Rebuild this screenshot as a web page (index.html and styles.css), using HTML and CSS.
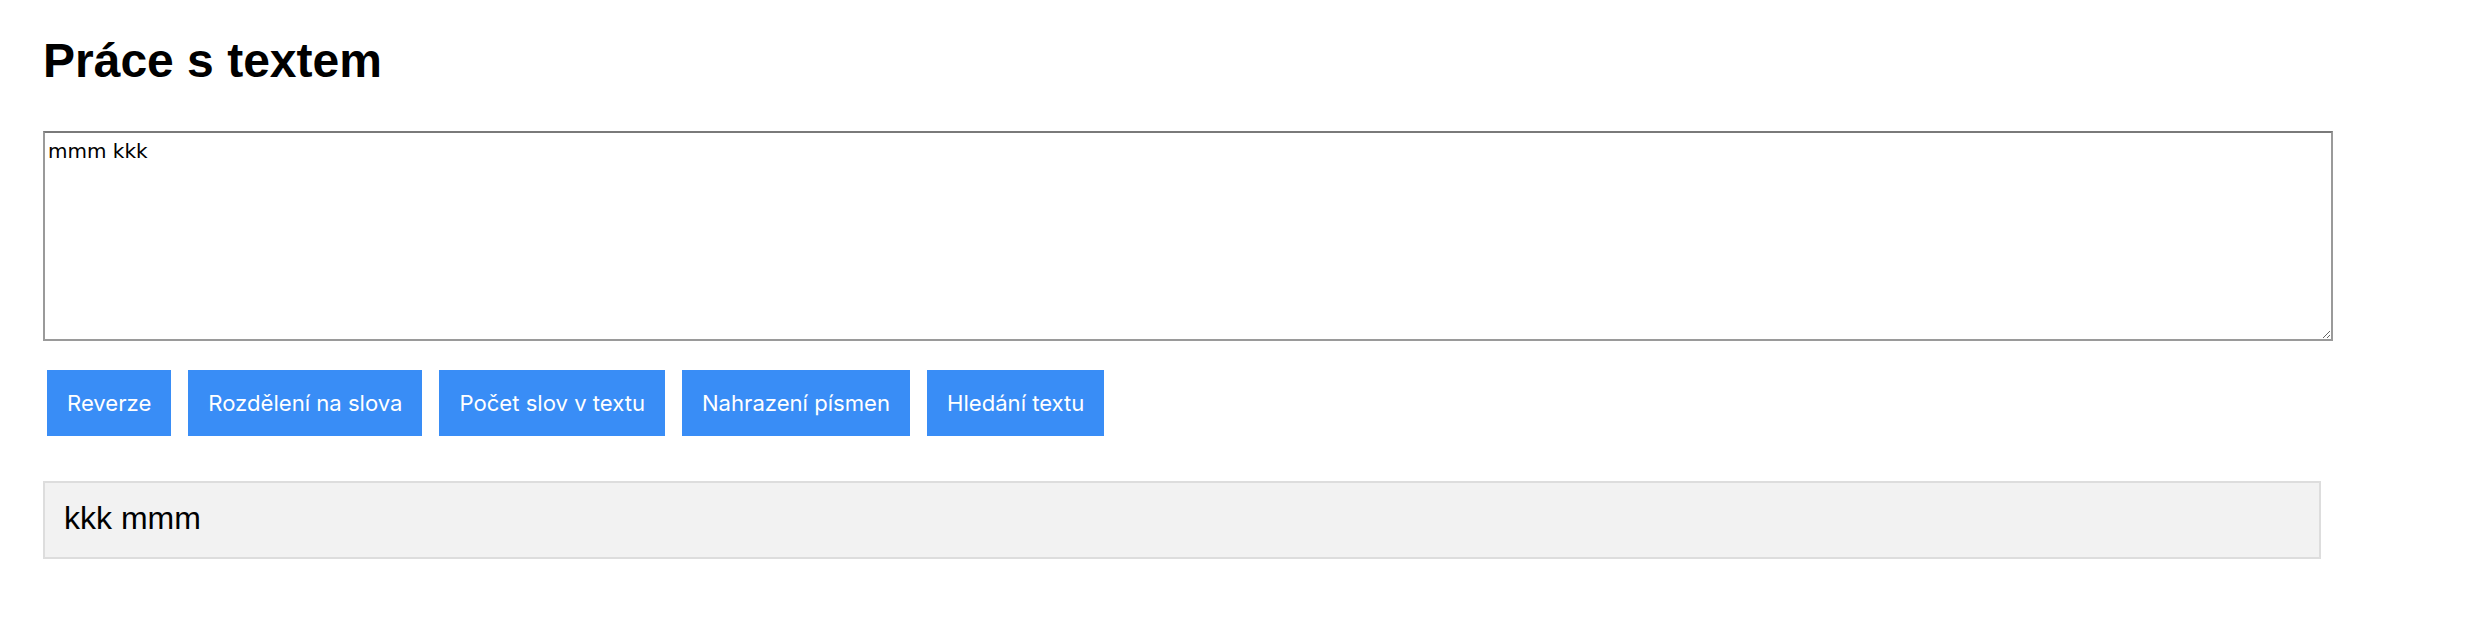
FILE: index.html
```html
<!DOCTYPE html>
<html lang="cs">
<head>
<meta charset="utf-8">
<title>Práce s textem</title>
<link rel="stylesheet" href="styles.css">
</head>
<body>
<div class="page">
  <h1 class="title">Práce s textem</h1>
  <textarea class="input">mmm kkk</textarea>
  <div class="actions">
    <button class="btn">Reverze</button>
    <button class="btn">Rozdělení na slova</button>
    <button class="btn">Počet slov v textu</button>
    <button class="btn">Nahrazení písmen</button>
    <button class="btn">Hledání textu</button>
  </div>
  <div class="result">kkk mmm</div>
</div>
</body>
</html>
```
FILE: styles.css
```css
html, body {
  margin: 0;
  padding: 0;
  background: #ffffff;
}
.page {
  padding: 0 0 0 43px;
}
.title {
  margin: 33px 0 0 0;
  font-family: "Liberation Sans", Arial, sans-serif;
  font-weight: bold;
  font-size: 48px;
  line-height: 55px;
  color: #000;
}
.input {
  display: block;
  box-sizing: border-box;
  margin: 43px 0 0 0;
  width: 2290px;
  height: 210px;
  padding: 6px 3px;
  border-style: solid;
  border-width: 2px;
  border-color: #7a7a7a #9a9a9a #9a9a9a #9a9a9a;
  font-family: "DejaVu Sans", sans-serif;
  font-size: 20px;
  color: #000;
  background: #fff;
  resize: both;
  outline: none;
}
.actions {
  display: flex;
  gap: 17px;
  margin: 29px 0 0 4px;
}
.btn {
  height: 66px;
  padding: 0 20px;
  border: none;
  background: #398df6;
  color: #ffffff;
  font-family: Inter, "Noto Sans", sans-serif;
  font-size: 22.1px;
  cursor: pointer;
}
.result {
  box-sizing: border-box;
  margin: 45px 0 0 0;
  width: 2278px;
  height: 78px;
  padding: 17px 19px;
  border: 2px solid #dddddd;
  background: #f2f2f2;
  font-family: "Liberation Sans", Arial, sans-serif;
  font-size: 32px;
  line-height: 36px;
  color: #000;
}
```
